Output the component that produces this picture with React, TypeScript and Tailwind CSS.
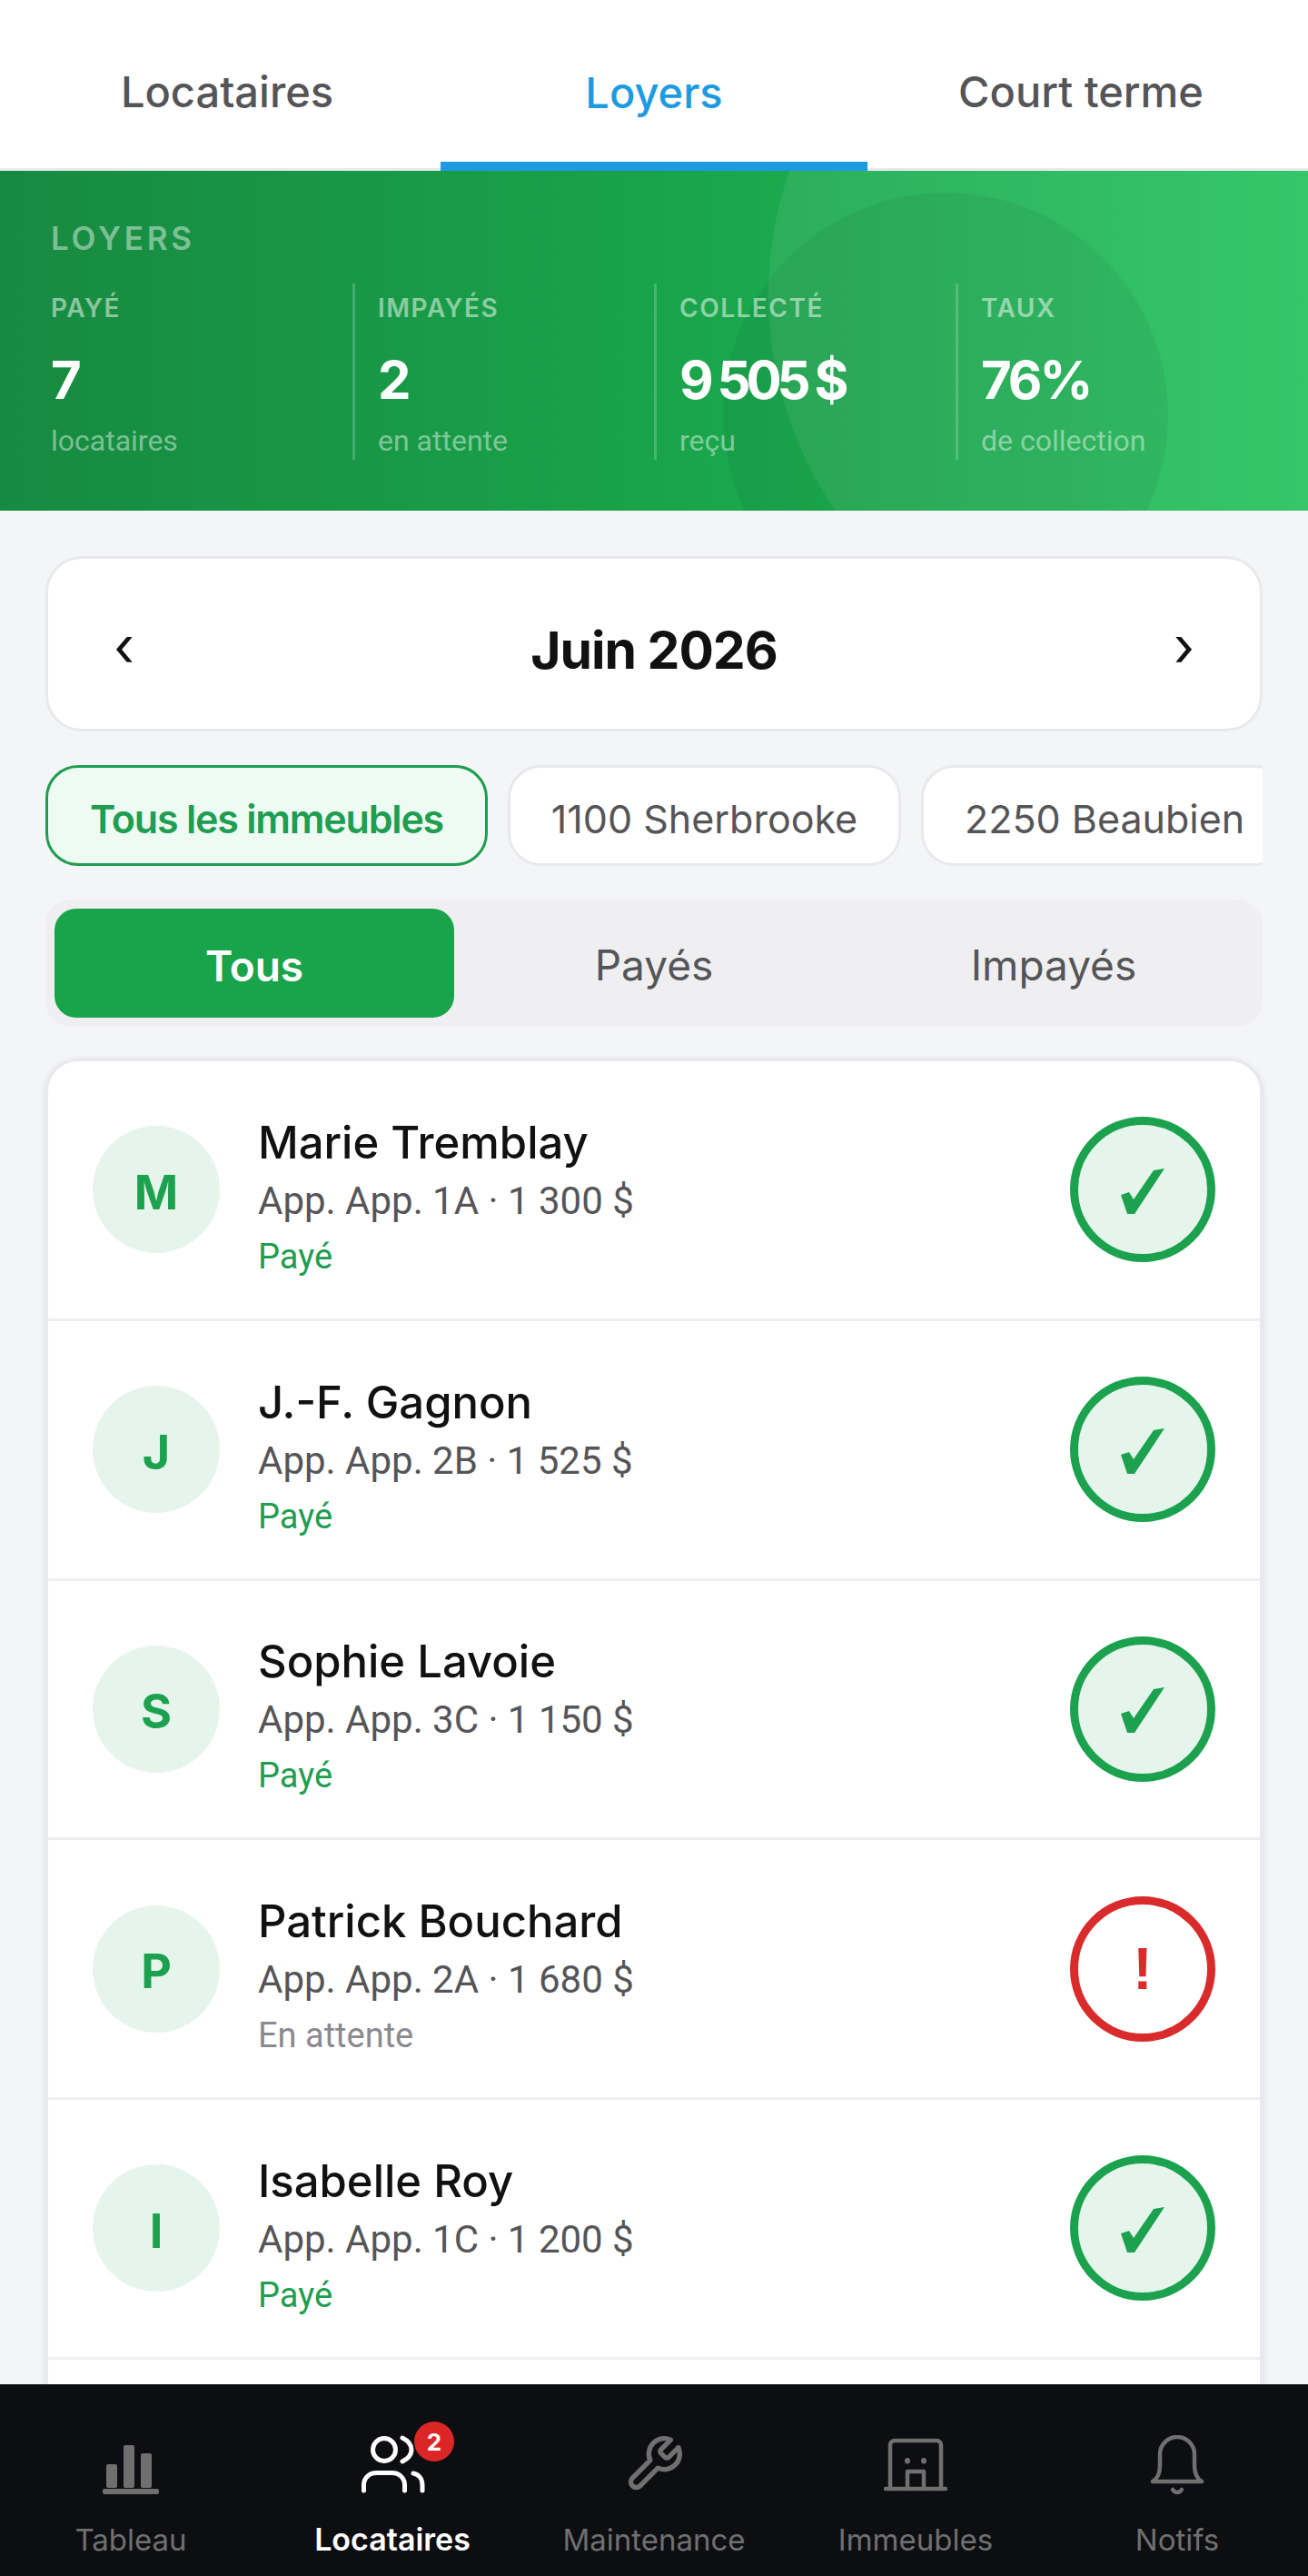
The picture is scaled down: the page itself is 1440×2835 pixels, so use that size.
const tenants = [
  { initial: "M", name: "Marie Tremblay", unit: "App. App. 1A · 1 300 $", paid: true },
  { initial: "J", name: "J.-F. Gagnon", unit: "App. App. 2B · 1 525 $", paid: true },
  { initial: "S", name: "Sophie Lavoie", unit: "App. App. 3C · 1 150 $", paid: true },
  { initial: "P", name: "Patrick Bouchard", unit: "App. App. 2A · 1 680 $", paid: false },
  { initial: "I", name: "Isabelle Roy", unit: "App. App. 1C · 1 200 $", paid: true },
]

const stats = [
  { label: "PAYÉ", value: "7", sub: "locataires" },
  { label: "IMPAYÉS", value: "2", sub: "en attente" },
  { label: "COLLECTÉ", value: "9\u00a0505\u00a0$", sub: "reçu", tight: true },
  { label: "TAUX", value: "76%", sub: "de collection" },
]

const CheckIcon = () => (
  <svg width="48" height="52" viewBox="0 0 48 52" fill="#1ca24f" className="mt-[3px]">
    <path d="M0 30 L9 27 L14 35 L36 3 L48 1 L15 51 L7 51 Z" />
  </svg>
)

const BarsIcon = () => (
  <svg width="64" height="56" viewBox="0 0 64 56" fill="#6f6f6f">
    <rect x="5" y="22" width="12" height="26" rx="2" />
    <rect x="24" y="1" width="12" height="47" rx="2" />
    <rect x="43" y="10" width="12" height="38" rx="2" />
    <rect x="1" y="49" width="62" height="6" rx="2" />
  </svg>
)

const UsersIcon = () => (
  <svg width="72" height="66" viewBox="0 0 72 66" fill="none" stroke="#fff" strokeWidth="5" strokeLinecap="round">
    <circle cx="27" cy="16" r="12.5" />
    <path d="M47 3c6 3 10 7 10 13s-4 10-10 13" />
    <path d="M4.5 61v-6c0-8 6-13.5 14-13.5h17c8 0 14 5.5 14 13.5v6" />
    <path d="M59 42c6 1 10 6 10 13v6" />
  </svg>
)

const WrenchIcon = () => (
  <svg width="68" height="68" viewBox="0 0 24 24" fill="none" stroke="#707070" strokeWidth="1.9" strokeLinecap="round" strokeLinejoin="round">
    <path d="M14.7 6.3a1 1 0 0 0 0 1.4l1.6 1.6a1 1 0 0 0 1.4 0l3.77-3.77a6 6 0 0 1-7.94 7.94l-6.91 6.91a2.12 2.12 0 0 1-3-3l6.91-6.91a6 6 0 0 1 7.94-7.94l-3.76 3.76z" />
  </svg>
)

const BuildingIcon = () => (
  <svg width="70" height="60" viewBox="0 0 70 60" fill="none" stroke="#707070" strokeWidth="4.5" strokeLinecap="round" strokeLinejoin="round" className="mb-[3px]">
    <path d="M7 56V8a5 5 0 0 1 5-5h46a5 5 0 0 1 5 5v48" />
    <path d="M2 56h66" />
    <path d="M26 56V37h18v19" />
    <path d="M26 25v.5M44 25v.5" strokeWidth="6" />
  </svg>
)

const BellIcon = () => (
  <svg width="60" height="66" viewBox="0 0 60 66" fill="none" stroke="#707070" strokeWidth="4.5" strokeLinecap="round" strokeLinejoin="round">
    <path d="M3 51c5-3 8-10 8-18V21a19 19 0 0 1 38 0v12c0 8 3 15 8 18z" />
    <path d="M25 60c3 4 7 4 10 0" />
  </svg>
)

const navItems = [
  { label: "Tableau", icon: <BarsIcon /> },
  { label: "Locataires", icon: <UsersIcon />, active: true, badge: 2 },
  { label: "Maintenance", icon: <WrenchIcon /> },
  { label: "Immeubles", icon: <BuildingIcon /> },
  { label: "Notifs", icon: <BellIcon /> },
]

export default function App() {
  return (
    <div className="flex h-[2835px] w-[1440px] flex-col overflow-hidden bg-[#f4f5f7] font-['Inter',sans-serif]">
      {/* top tabs */}
      <div className="flex h-[188px] shrink-0 border-b-[3px] border-[#e8eaed] bg-white px-[15px] text-[47px] font-medium text-[#555558]">
        <div className="flex flex-1 items-center justify-center pt-[17px]">Locataires</div>
        <div className="mb-[-3px] flex flex-1 items-center justify-center border-b-[10px] border-[#1e9be0] pt-[27px] text-[#1e9be0]">Loyers</div>
        <div className="flex flex-1 items-center justify-center pt-[17px]">Court terme</div>
      </div>

      {/* hero */}
      <div className="relative h-[374px] shrink-0 overflow-hidden bg-gradient-to-r from-[#178a41] via-[#19a34a] to-[#24c25e] px-[56px] pt-[54px]">
        <div className="absolute left-[846px] top-[-281px] h-[836px] w-[836px] rounded-full bg-white/[0.08]" />
        <div className="absolute left-[796px] top-[24px] h-[490px] w-[490px] rounded-full bg-black/5" />
        <div className="relative text-[35px] leading-[40px] font-semibold tracking-[3.8px] text-white/45">LOYERS</div>
        <div className="relative mt-[30px] grid grid-cols-4">
          {stats.map((stat, i) => (
            <div key={stat.label} className={i === 0 ? "h-[194px] pt-[10px]" : "h-[194px] border-l-[3px] border-white/20 pl-[25px] pt-[10px]"}>
              <div className="text-[28px] leading-[34px] font-semibold tracking-[1.5px] text-white/50">{stat.label}</div>
              <div className={stat.tight ? "mt-[29px] text-[58px] leading-[66px] font-bold tracking-[-5px] text-white" : "mt-[29px] text-[58px] leading-[66px] font-bold tracking-[-3px] text-white"}>{stat.value}</div>
              <div className="mt-[14px] font-['Roboto',sans-serif] text-[32px] leading-[40px] text-white/45">{stat.sub}</div>
            </div>
          ))}
        </div>
      </div>

      {/* content */}
      <div className="flex min-h-0 flex-1 flex-col overflow-hidden px-[50px] pt-[50px]">
        <div className="flex h-[193px] shrink-0 items-center justify-between rounded-[40px] border-[3px] border-[#e8e9ec] bg-white px-[72px]">
          <span className="pt-[4px] text-[60px] leading-none text-[#111]">‹</span>
          <span className="pt-[14px] text-[57px] font-bold tracking-[-1px] text-[#111]">Juin 2026</span>
          <span className="pt-[4px] text-[60px] leading-none text-[#111]">›</span>
        </div>

        <div className="mt-[37px] flex h-[111px] shrink-0 gap-[22px] overflow-hidden text-[43px] whitespace-nowrap">
          <div className="flex w-[487px] shrink-0 items-center justify-center rounded-[36px] border-[3px] border-[#1f9d50] bg-[#edfbf3] pt-[7px] font-semibold tracking-[-1.2px] text-[#1f9d50]">Tous les immeubles</div>
          <div className="flex w-[433px] shrink-0 items-center justify-center rounded-[36px] border-[3px] border-[#e8e9ec] bg-white pt-[7px] text-[#555558]">1100 Sherbrooke</div>
          <div className="flex shrink-0 items-center rounded-[36px] border-[3px] border-[#e8e9ec] bg-white px-[45px] pt-[7px] text-[#555558]">2250 Beaubien</div>
        </div>

        <div className="mt-[37px] grid h-[140px] shrink-0 grid-cols-3 items-center rounded-[28px] bg-[#efeff2] p-[10px] text-center text-[46px] text-[#555558]">
          <div className="flex h-full items-center justify-center rounded-[24px] bg-[#19a44b] pt-[7px] font-semibold text-white">Tous</div>
          <div className="pt-[5px]">Payés</div>
          <div className="pt-[5px]">Impayés</div>
        </div>

        <div className="mt-[35px] shrink-0 rounded-[36px] border-[3px] border-[#e8e9ec] bg-white shadow-[0_2px_6px_rgba(40,40,80,0.14)]">
          {tenants.map((t) => (
            <div key={t.name} className="flex h-[285.75px] items-center border-b-[3px] border-[#eeeff1] pl-[49px] pr-[49px]">
              <div className="flex h-[140px] w-[140px] shrink-0 items-center justify-center rounded-full bg-[#e6f5ec] pt-[7px] text-[52px] font-bold text-[#1ca24f]">{t.initial}</div>
              <div className="ml-[42px] flex-1 pt-[17px]">
                <div className="text-[49px] leading-[60px] font-[550] text-[#111]">{t.name}</div>
                <div className="mt-[6px] font-['Roboto',sans-serif] text-[42px] leading-[56px] text-[#555558]">{t.unit}</div>
                <div className={t.paid ? "mt-[8px] font-['Roboto',sans-serif] text-[38px] leading-[50px] text-[#1f9d50]" : "mt-[8px] font-['Roboto',sans-serif] text-[38px] leading-[50px] text-[#8a8a8e]"}>
                  {t.paid ? "Payé" : "En attente"}
                </div>
              </div>
              {t.paid ? (
                <div className="flex h-[160px] w-[160px] shrink-0 items-center justify-center rounded-full border-[9px] border-[#1ca24f] bg-[#e6f5ec]">
                  <CheckIcon />
                </div>
              ) : (
                <div className="flex h-[160px] w-[160px] shrink-0 items-center justify-center rounded-full border-[9px] border-[#d92b2b] bg-white font-['Liberation_Sans',sans-serif] text-[64px] font-bold text-[#d92b2b]">!</div>
              )}
            </div>
          ))}
          <div className="h-[120px]" />
        </div>
      </div>

      {/* bottom nav */}
      <div className="grid h-[211px] shrink-0 grid-cols-5 bg-[#0d0e11]">
        {navItems.map((item) => (
          <div key={item.label} className="flex flex-col items-center pt-[52px]">
            <div className="relative flex h-[70px] items-end">
              {item.icon}
              {item.badge && (
                <span className="absolute right-[-32px] top-[-11px] flex h-[44px] w-[44px] items-center justify-center rounded-full bg-[#dc2626] text-[26px] font-bold text-white">{item.badge}</span>
              )}
            </div>
            <div className={item.active ? "mt-[27px] text-[34px] leading-[44px] font-semibold text-white" : "mt-[27px] text-[33px] leading-[44px] text-[#707070]"}>{item.label}</div>
          </div>
        ))}
      </div>
    </div>
  )
}
